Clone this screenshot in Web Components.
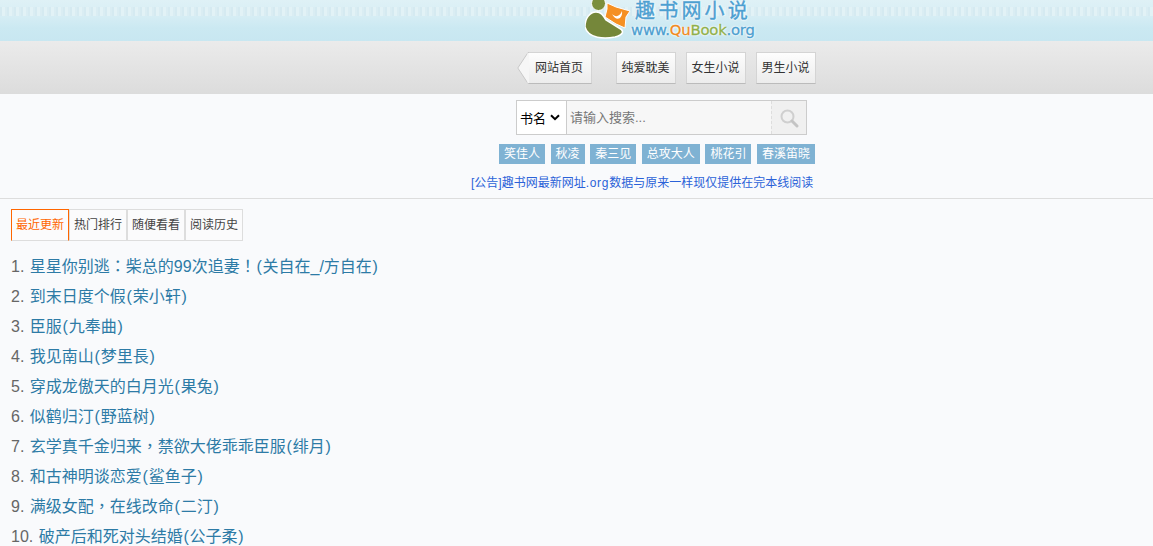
<!DOCTYPE html>
<html lang="zh"><head><meta charset="utf-8"><title>趣书网小说</title>
<style>
html,body{margin:0;padding:0;background:#f9fafc;overflow:hidden}
body{font-family:"Liberation Sans","Noto Sans CJK SC",sans-serif;height:546px}
.p{font-family:"Noto Sans CJK TC",sans-serif;line-height:0}
</style></head><body>
<site-top></site-top>
<site-nav>
  <nav-btn back>网站首页</nav-btn>
  <nav-btn>纯爱耽美</nav-btn>
  <nav-btn>女生小说</nav-btn>
  <nav-btn>男生小说</nav-btn>
</site-nav>
<search-box></search-box>
<tag-row>
  <tag-chip>笑佳人</tag-chip><tag-chip>秋凌</tag-chip><tag-chip>秦三见</tag-chip><tag-chip>总攻大人</tag-chip><tag-chip>桃花引</tag-chip><tag-chip>春溪笛晓</tag-chip>
</tag-row>
<site-notice>[公告]趣书网最新网址<span style="letter-spacing:.7px">.org</span>数据与原来一样现仅提供在完本线阅读</site-notice>
<tab-bar>
  <tab-item active>最近更新</tab-item><tab-item>热门排行</tab-item><tab-item>随便看看</tab-item><tab-item>阅读历史</tab-item>
</tab-bar>
<book-list>
  <book-row n="1" by="关自在_/方自在">星星你别逃<span class="p" lang="zh-Hant">：</span>柴总的99次追妻<span class="p" lang="zh-Hant">！</span></book-row>
  <book-row n="2" by="荣小轩">到末日度个假</book-row>
  <book-row n="3" by="九奉曲">臣服</book-row>
  <book-row n="4" by="梦里長">我见南山</book-row>
  <book-row n="5" by="果兔">穿成龙傲天的白月光</book-row>
  <book-row n="6" by="野蓝树">似鹤归汀</book-row>
  <book-row n="7" by="绯月">玄学真千金归来<span class="p" lang="zh-Hant">，</span>禁欲大佬乖乖臣服</book-row>
  <book-row n="8" by="鲨鱼子">和古神明谈恋爱</book-row>
  <book-row n="9" by="二汀">满级女配<span class="p" lang="zh-Hant">，</span>在线改命</book-row>
  <book-row n="10" by="公子柔">破产后和死对头结婚</book-row>
</book-list>
<script>
function def(name,html,setup){
  customElements.define(name,class extends HTMLElement{
    constructor(){super();this.attachShadow({mode:'open'}).innerHTML=html;}
    connectedCallback(){if(setup)setup(this);}
  });
}
def('site-top',`<style>
:host{display:block;height:41px;overflow:hidden;padding-left:585px;box-sizing:border-box;
background:linear-gradient(#dff1f6 0,#d8eef5 14px,#cbe9f2 28px,#c8e7f1 41px);position:relative}
.pat{position:absolute;left:0;right:0;top:7px;height:9px;
background:repeating-linear-gradient(90deg,#d5eaf1 0 2px,#e2f2f6 2px 5px,#daedf3 5px 7px)}
.logo{position:relative;width:172px;height:41px}
svg{position:absolute;left:0;top:0;width:46px;height:40px}
.t1{position:absolute;left:50px;top:0;font-size:20px;letter-spacing:3.2px;line-height:22px;color:#4d9fd1;white-space:nowrap;
-webkit-text-stroke:.4px #4d9fd1;text-shadow:0 0 2px #fff,0 0 2px #fff,0 0 3px #fff}
.t2{position:absolute;left:46px;top:21px;font-size:14.8px;line-height:18px;color:#4c9fd0;font-family:"DejaVu Sans","Liberation Sans",sans-serif;white-space:nowrap;letter-spacing:-.2px;-webkit-text-stroke:.3px currentColor;text-shadow:0 0 2px #fff,0 0 2px #fff,0 0 3px #fff}
.q{color:#f08a1d}.b{color:#8fb04a}
</style><div class="pat"></div><div class="logo">
<svg viewBox="0 0 46 40"><path d="M0 27C0 18 5 12 11 12 16 12 18 15 21 20L34 28C40 31 38 35 30 37 20 39 3 39 0 27Z" fill="#75873a" stroke="#fff" stroke-width="1.5"/><circle cx="13.500" cy="3.500" r="7" fill="#7c8f3c" stroke="#fff" stroke-width="1"/><path d="M22 3 31 7 45 11 41 17 40 28 31 24 20 17 22 9Z" fill="#f59023" stroke="#fff" stroke-width="1"/><path d="M27 14C31 18 35 16 37 11 38 19 31 22 27 14Z" fill="#fff"/></svg>
<span class="t1">趣书网小说</span>
<span class="t2">www.<span class="q">Qu</span><span class="b">Book</span>.org</span>
</div>`);
def('site-nav',`<style>
:host{display:flex;gap:10px;height:53px;box-sizing:border-box;padding:11px 0 0 528px;
background:linear-gradient(#ebebeb,#dcdcdc)}
::slotted(nav-btn[back]){margin-right:14px}
</style><slot></slot>`);
def('nav-btn',`<style>
:host{display:block;position:relative;width:60px;height:32px;box-sizing:border-box;border:1px solid #d4d4d4;border-bottom-color:#bbb;padding-right:1px;
background:linear-gradient(#fdfdfd,#ececec);font-size:12px;line-height:31px;text-align:center;color:#333}
:host([back]){width:64px;border-left:0;text-align:left;padding:0 0 0 7px}
.a{display:none;position:absolute;left:-11px;top:-1px}
:host([back]) .a{display:block}
</style><svg class="a" width="12" height="32" viewBox="0 0 12 32"><path d="M12 .5 11 .5 .8 16 11 31.5 12 31.5Z" fill="#f6f6f6" stroke="#c8c8c8"/><path d="M11.5 1V31" stroke="#f6f6f6" stroke-width="2"/></svg><slot></slot>`);
def('search-box',`<style>
:host{display:block;height:35px;margin-top:6px;padding-left:516px}
.w{display:flex;width:291px;height:35px;box-sizing:border-box;border:1px solid #ccc;background:#fff}
.s{width:50px;border-right:1px solid #ccc;display:flex;align-items:center;font-size:13px;color:#000;box-sizing:border-box;padding-left:3px;background:#fff;gap:4px}
.i{flex:1;background:#f7f7f7;font-size:13px;color:#777;line-height:33px;padding-left:3px;min-width:0}
.b{width:35px;box-sizing:border-box;border-left:1px dashed #ddd;background:#f0f0f0;display:flex;align-items:center;justify-content:center}
</style><div class="w"><div class="s"><span>书名</span><svg width="10" height="7" viewBox="0 0 10 7"><path d="M1 1.2 5 5.2 9 1.2" fill="none" stroke="#000" stroke-width="2"/></svg></div><div class="i">请输入搜索...</div><div class="b"><svg width="20" height="20" viewBox="0 0 20 20"><circle cx="8.5" cy="8.5" r="6" fill="none" stroke="#cfcfcf" stroke-width="2"/><path d="M13 13 18 18" stroke="#c4c4c4" stroke-width="3" stroke-linecap="round"/></svg></div></div>`);
def('tag-row',`<style>
:host{display:flex;gap:5.6px;height:20px;margin-top:9px;padding-left:499px}
</style><slot></slot>`);
def('tag-chip',`<style>
:host{display:block;height:20px;line-height:20px;padding:0 5px;background:#7fb2d3;color:#fff;font-size:12px;white-space:nowrap}
</style><slot></slot>`);
def('site-notice',`<style>
:host{display:block;height:35px;box-sizing:border-box;border-bottom:1px solid #ddd;padding:11px 0 0 471px;font-size:12px;line-height:16px;color:#2b62d8;white-space:nowrap}
</style><slot></slot>`);
def('tab-bar',`<style>
:host{display:flex;margin:10px 0 0 11px;height:32px}
</style><slot></slot>`);
def('tab-item',`<style>
:host{display:block;width:58px;height:32px;box-sizing:border-box;border:1px solid #ddd;font-size:12px;line-height:30px;text-align:center;color:#444;background:#fbfbfc}
:host([active]){border-color:#f60 #f60 #ddd #f60;color:#f60}
</style><slot></slot>`);
def('book-list',`<style>
:host{display:block;margin-top:11px;font-size:16px;line-height:30px}
</style><slot></slot>`);
def('book-row',`<style>
:host{display:block;height:30px;padding-left:11px;color:#666;white-space:nowrap}
a{color:#2d7ba6;text-decoration:none;margin-left:1px}
i{font-style:normal;padding:0 .75px}
</style><span id="n"></span> <a href="#"><slot></slot><i>(</i><span id="by"></span><i>)</i></a>`,el=>{
  el.shadowRoot.getElementById('n').textContent=el.getAttribute('n')+'.';
  el.shadowRoot.getElementById('by').textContent=el.getAttribute('by');
});
</script>
</body></html>
